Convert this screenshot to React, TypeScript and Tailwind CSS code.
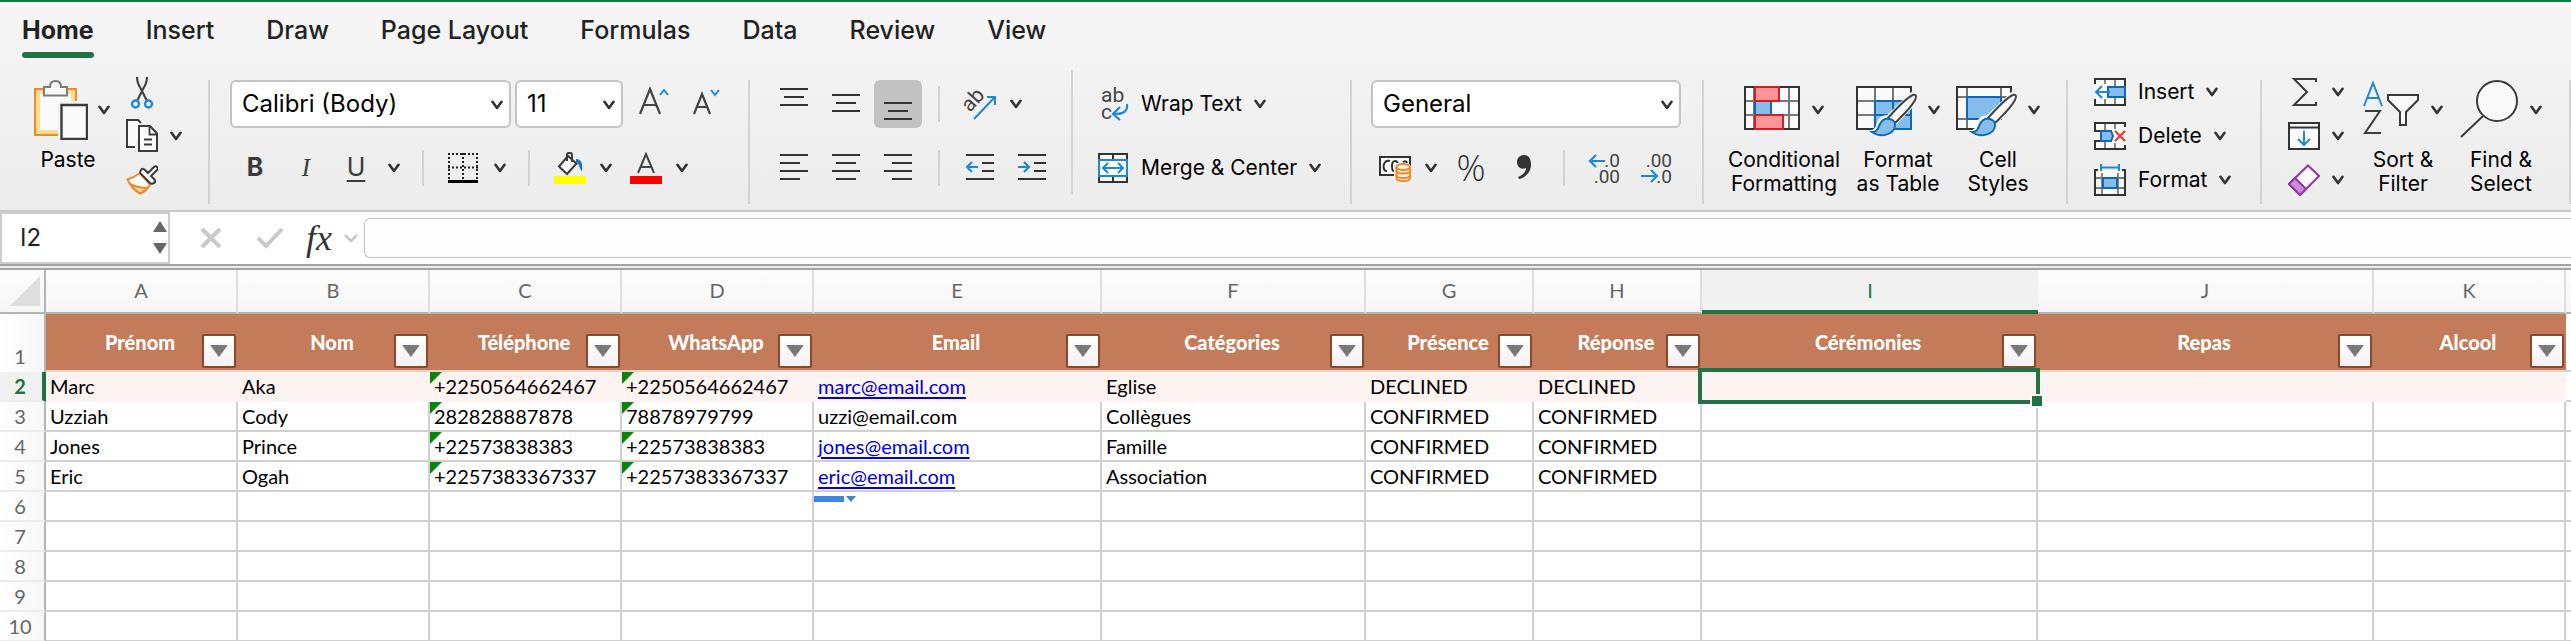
import { useState } from 'react';
import type { ReactNode } from 'react';

const tabs = ['Home', 'Insert', 'Draw', 'Page Layout', 'Formulas', 'Data', 'Review', 'View'];

const columns = [
  { id: 'A', name: 'Prénom', width: 192 },
  { id: 'B', name: 'Nom', width: 192 },
  { id: 'C', name: 'Téléphone', width: 192 },
  { id: 'D', name: 'WhatsApp', width: 192 },
  { id: 'E', name: 'Email', width: 288 },
  { id: 'F', name: 'Catégories', width: 264 },
  { id: 'G', name: 'Présence', width: 168 },
  { id: 'H', name: 'Réponse', width: 168 },
  { id: 'I', name: 'Cérémonies', width: 336 },
  { id: 'J', name: 'Repas', width: 336 },
  { id: 'K', name: 'Alcool', width: 192 }
];

const guests = [
  ['Marc', 'Aka', '+2250564662467', '+2250564662467', 'marc@email.com', 'Eglise', 'DECLINED', 'DECLINED'],
  ['Uzziah', 'Cody', '282828887878', '78878979799', 'uzzi@email.com', 'Collègues', 'CONFIRMED', 'CONFIRMED'],
  ['Jones', 'Prince', '+22573838383', '+22573838383', 'jones@email.com', 'Famille', 'CONFIRMED', 'CONFIRMED'],
  ['Eric', 'Ogah', '+2257383367337', '+2257383367337', 'eric@email.com', 'Association', 'CONFIRMED', 'CONFIRMED']
];

const rowNumbers = [2, 3, 4, 5, 6, 7, 8, 9, 10];

function Chevron() {
  return (
    <svg width="12" height="10" viewBox="0 0 12 10" fill="none" stroke="#333" strokeWidth="2.6" strokeLinecap="round" strokeLinejoin="round" className="shrink-0">
      <path d="M1.500 1.800 6 8l4.500-6.200" />
    </svg>
  );
}

function Divider({ className = 'h-[124px] mt-[10px]' }: { className?: string }) {
  return <div className={`w-0.5 shrink-0 bg-[#d3d3d3] ${className}`} />;
}

function IconButton({ label, className = '', children }: { label: string; className?: string; children: ReactNode }) {
  return (
    <button type="button" aria-label={label} className={`flex shrink-0 items-center justify-center ${className}`}>
      {children}
    </button>
  );
}

function PasteIcon() {
  return (
    <svg width="54" height="60" viewBox="0 0 54 60" fill="none" strokeWidth="2">
      <path d="M1 9h41v46H1z" fill="#fcdb93" stroke="#ec8a2d" />
      <path d="M6 14h31v36H6z" fill="#fafafa" />
      <path d="M10 7h6c0-4 2-6 5.500-6S27 3 27 7h6v8.500H10z" fill="#fafafa" stroke="#7b7b7b" />
      <path d="M24 21h30v39H24z" fill="#f3f3f3" />
      <path d="M27.500 25h25.500v34H27.500z" fill="#fafafa" stroke="#3b3b3b" strokeWidth="2.400" />
    </svg>
  );
}

function CutIcon() {
  return (
    <svg width="32" height="33" viewBox="0 0 32 33" fill="none" strokeWidth="2.200">
      <path d="M11 1c0 5 2 9 4 12l6 12M21 1c0 5-2 9-4 12l-6 12" stroke="#444" />
      <circle cx="9.500" cy="28" r="3.500" stroke="#1e88d2" strokeWidth="2.400" />
      <circle cx="22.500" cy="28" r="3.500" stroke="#1e88d2" strokeWidth="2.400" />
    </svg>
  );
}

function CopyIcon() {
  return (
    <svg width="32" height="34" viewBox="0 0 32 34" fill="none" stroke="#3b3b3b" strokeWidth="2">
      <path d="M9 28H1V1h11l3 3" fill="#fafafa" />
      <path d="M13 7h11l7 7.500V32H13z" fill="#fafafa" />
      <path d="M23.500 7v8.500H31M18 20.500h8M18 25.500h8" strokeWidth="1.800" />
    </svg>
  );
}

function PainterIcon() {
  return (
    <svg width="32" height="30" viewBox="0 0 32 30" fill="none" strokeWidth="2">
      <path d="M14 8C10 11 6 13 1.500 14.500 4 20 8 25 14 28.500c5-2 8-5 10-9z" fill="#fafafa" stroke="#ec8a2d" />
      <path d="M4 19c6 3 11 4 17 4-2 3-4 4-7 5.500C10 26 7 23 4 19z" fill="#fcdb93" stroke="#ec8a2d" />
      <path d="M15 5c1-2 3-1 4 0l3 3 6-6c2-2 5 1 3 3l-6 6 3 3c1 1 2 3 0 4s-3 1-4 0L15 9c-1-1-1-3 0-4z" fill="#fafafa" stroke="#3b3b3b" />
    </svg>
  );
}

function BordersIcon() {
  return (
    <svg width="30" height="30" viewBox="0 0 30 30" fill="none" stroke="#222" strokeWidth="2">
      <path d="M0 1h30M0 14.500h30M1 0v26M15 0v26M29 0v26" strokeDasharray="2 2" />
      <path d="M0 28.500h30" stroke="#000" strokeWidth="3" />
    </svg>
  );
}

function FillColorIcon() {
  return (
    <svg width="32" height="32" viewBox="0 0 32 32" fill="none">
      <path d="M14 4 5 14.500l8 7.500 9.500-10.500z" fill="#fafafa" stroke="#3b3b3b" strokeWidth="2" />
      <path d="M13 9V3c0-3 5-3 5 0v7" stroke="#3b3b3b" strokeWidth="2" />
      <path d="M22 7c5 0 7 4 6 12-3-2-2-7-6-9z" fill="#1e72bd" />
      <path d="M0 24h32v8H0z" fill="#ff0" />
    </svg>
  );
}

// Each line is [start x, end x, y]
function LinesIcon({ lines }: { lines: [number, number, number][] }) {
  return (
    <svg width="28" height="48" viewBox="0 0 28 48" stroke="#333" strokeWidth="2">
      {lines.map(([x1, x2, y]) => (
        <path key={y} d={`M${x1} ${y}H${x2}`} />
      ))}
    </svg>
  );
}

function IndentIcon({ out = false }: { out?: boolean }) {
  return (
    <svg width="28" height="48" viewBox="0 0 28 48" fill="none" stroke="#333" strokeWidth="2">
      <path d="M0 11h28M16 19h12M16 27h12M0 35h28" />
      <path d={out ? 'M12 23H1m5-5-5 5 5 5' : 'M0 23h11m-5-5 5 5-5 5'} stroke="#1e88d2" strokeWidth="2.200" />
    </svg>
  );
}

function OrientationIcon() {
  return (
    <svg width="32" height="32" viewBox="0 0 32 32" fill="none" className="overflow-visible">
      <text x="6" y="25" transform="rotate(-48 6 25)" fontFamily="Roboto, sans-serif" fontSize="21" fill="#444">ab</text>
      <path d="M10 31 31 9M23 9h8v8" stroke="#1e88d2" strokeWidth="2" />
    </svg>
  );
}

function WrapIcon() {
  return (
    <svg width="32" height="34" viewBox="0 0 32 34" fill="none" className="overflow-visible">
      <text x="4" y="15" fontFamily="Roboto, sans-serif" fontSize="21" fill="#444">ab</text>
      <text x="4" y="32" fontFamily="Roboto, sans-serif" fontSize="21" fill="#444">c</text>
      <path d="M30 17c1 8-4 10-13 10m6-7-7 7 7 6" stroke="#1e88d2" strokeWidth="2.200" />
    </svg>
  );
}

function MergeIcon() {
  return (
    <svg width="30" height="30" viewBox="0 0 30 30" fill="none" strokeWidth="2">
      <path d="M1 1h28v28H1zM15 1v28" fill="#fafafa" stroke="#333" />
      <path d="M1 7h28v16H1z" fill="#fafafa" stroke="#1e88d2" />
      <path d="M5 15h20M10 10l-5 5 5 5M20 10l5 5-5 5" stroke="#1e88d2" />
    </svg>
  );
}

function CurrencyIcon() {
  return (
    <svg width="32" height="28" viewBox="0 0 32 28" fill="none" strokeWidth="2">
      <path d="M1 3h30v18H1z" fill="#fafafa" stroke="#333" />
      <path d="M11 7C3 5 3 18 8 17M19 9c-2-3-6-3-6 3 0 4 1 5 2 5M24 8c3-2 4 0 4 2" stroke="#333" />
      <path d="M15 12l3-3h11l3 3v16H15z" fill="#f1f1f1" />
      <path d="M17.500 13v11c0 4 13.500 4 13.500 0V13" fill="#fff3e0" stroke="#ec8a2d" />
      <path d="M17.500 16.500c0 4 13.500 4 13.500 0M17.500 21c0 4 13.500 4 13.500 0" stroke="#ec8a2d" />
      <ellipse cx="24.200" cy="13" rx="6.800" ry="3" fill="#fff3e0" stroke="#ec8a2d" />
    </svg>
  );
}

function CommaIcon() {
  return (
    <svg width="14" height="26" viewBox="0 0 14 26">
      <path d="M7 0c4 0 7 3 7 9 0 8-5 13-12 15l-1-2c5-2 8-5 8-9-5 2-9-1-9-6 0-4 3-7 7-7z" fill="#333" />
    </svg>
  );
}

function DecimalIcon({ more = false }: { more?: boolean }) {
  return (
    <svg width="32" height="32" viewBox="0 0 32 32" fill="none" className="overflow-visible">
      <g fontFamily="Roboto, sans-serif" fontSize="19" fill="#444" textAnchor="end">
        <text x="31" y="15">{more ? '.0' : '.00'}</text>
        <text x="31" y="31">{more ? '.00' : '.0'}</text>
      </g>
      <path d={more ? 'M16 9H1m6-6-6 6 6 6' : 'M0 24h16m-6-6 6 6-6 6'} stroke="#1e88d2" strokeWidth="2.200" />
    </svg>
  );
}

function Brush() {
  return (
    <>
      <path d="M14 53c8 5 23 1 25-10L61 20c3-5 0-9-5-6L32 37c-8 0-9 5-10 9-1 4-5 6-8 7z" fill="#f3f3f3" stroke="#f3f3f3" strokeWidth="4" />
      <path d="M32 38C40 29 50 18 57 15c3-1 4 1 2 5-4 8-13 16-20 23z" fill="#fafafa" stroke="#444" strokeWidth="2" />
      <path d="M16 52c6 0 6-4 8-8 4-8 16-6 15 2-1 9-15 12-23 6z" fill="#84bdea" stroke="#1267b4" strokeWidth="2" />
    </>
  );
}

function ConditionalIcon() {
  return (
    <svg width="56" height="60" viewBox="0 0 56 60" fill="none" strokeWidth="2">
      <path d="M1 7h54v42H1z" fill="#fafafa" />
      <path d="M1 21h54M1 35h54M10 7v42M45 7v42" stroke="#777" />
      <path d="M1 7h54v42H1z" stroke="#333" />
      <path d="M27 22h17v12H27z" fill="#fafafa" />
      <path d="M11 21h16v14H11z" fill="#84bdea" stroke="#1267b4" />
      <path d="M11 7h24v14H11zM11 35h28v14H11z" fill="#ff9499" stroke="#cf2027" />
    </svg>
  );
}

function FormatTableIcon() {
  return (
    <svg width="60" height="60" viewBox="0 0 60 60" fill="none" strokeWidth="2" className="overflow-visible">
      <path d="M1 7h54v42H1z" fill="#fafafa" />
      <path d="M1 21h54M1 35h54M19 7v42M37 7v42" stroke="#777" />
      <path d="M1 7h54v42H1z" stroke="#333" />
      <path d="M19 21h36v28H19zM37 21v28M19 35h36" fill="#84bdea" stroke="#1267b4" />
      <Brush />
    </svg>
  );
}

function CellStylesIcon() {
  return (
    <svg width="60" height="60" viewBox="0 0 60 60" fill="none" strokeWidth="2" className="overflow-visible">
      <path d="M1 7h54v10H45v22l-8 10H1z" fill="#fafafa" />
      <path d="M1 17h54M1 39h30M11 7v42M45 7v22" stroke="#777" />
      <path d="M55 18V7H1v42h22" stroke="#333" />
      <path d="M11 17h34v22H11z" fill="#84bdea" stroke="#1267b4" />
      <Brush />
    </svg>
  );
}

function InsertCellsIcon() {
  return (
    <svg width="32" height="28" viewBox="0 0 32 28" fill="none" strokeWidth="2">
      <path d="M1 1h30v26H1z" fill="#fafafa" />
      <path d="M11 1v26M21 1v26M1 9h30M1 19h30" stroke="#777" strokeWidth="1.800" />
      <path d="M1 1h30v26H1z" stroke="#333" />
      <path d="M0 6h16v15H0z" fill="#fafafa" />
      <path d="M14 9h17v10H14z" fill="#84bdea" stroke="#1267b4" />
      <path d="M16 14H2m6-6-6 6 6 6" stroke="#1e88d2" />
    </svg>
  );
}

function DeleteCellsIcon() {
  return (
    <svg width="32" height="28" viewBox="0 0 32 28" fill="none" strokeWidth="2">
      <path d="M1 1h30v26H1z" fill="#fafafa" />
      <path d="M11 1v26M21 1v26" stroke="#777" strokeWidth="1.800" />
      <path d="M31 5V1H1v8h30M31 23v4H1v-8h30" stroke="#333" />
      <path d="M18 7h14v14H18z" fill="#fafafa" />
      <path d="M7 9h10l2 5-2 5H7z" fill="#84bdea" stroke="#1267b4" />
      <path d="m21 9 10 10M31 9 21 19" stroke="#e8403a" strokeWidth="2.400" />
    </svg>
  );
}

function FormatCellsIcon() {
  return (
    <svg width="32" height="32" viewBox="0 0 32 32" fill="none" strokeWidth="2">
      <path d="M1 6h30v25H1z" fill="#fafafa" />
      <path d="M8 9v22M24 9v22M1 14h30M1 24h30" stroke="#777" strokeWidth="1.800" />
      <path d="M4 6H1v25h30V6h-3" stroke="#333" />
      <path d="M9 14h14v10H9z" fill="#84bdea" stroke="#1267b4" />
      <path d="M7 0v7M25 0v7M7 3.500h18" stroke="#1e88d2" />
    </svg>
  );
}

function SumIcon() {
  return (
    <svg width="32" height="28" viewBox="0 0 32 28" fill="none" stroke="#3b3b3b" strokeWidth="2">
      <path d="M28 4V1H6l13 13L6 27h22v-3" />
    </svg>
  );
}

function FillDownIcon() {
  return (
    <svg width="32" height="28" viewBox="0 0 32 28" fill="none" strokeWidth="2">
      <path d="M1 1h30v26H1zM1 5.500h30" fill="#fafafa" stroke="#333" />
      <path d="M16 9v14m-6-6 6 6 6-6" stroke="#1e88d2" />
    </svg>
  );
}

function EraserIcon() {
  return (
    <svg width="32" height="32" viewBox="0 0 32 32" fill="none" stroke="#92359e" strokeWidth="2">
      <path d="M20 1.500 31 12 12 31 1 20z" fill="#fafafa" />
      <path d="m7 14 11 11-6 6L1 20z" fill="#cf8ddb" />
    </svg>
  );
}

function SortFilterIcon() {
  return (
    <svg width="56" height="60" viewBox="0 0 56 60" fill="none" strokeWidth="2">
      <path d="M1 26 10 3l9 23M4 18h12" stroke="#1e88d2" />
      <path d="M2 31h15L2 53h16" stroke="#3b3b3b" />
      <path d="M25 15h30v5L43 32v13h-6V32L25 20z" fill="#fafafa" stroke="#3b3b3b" />
    </svg>
  );
}

function FindIcon() {
  return (
    <svg width="58" height="60" viewBox="0 0 58 60" fill="none" stroke="#3b3b3b" strokeWidth="2">
      <circle cx="37" cy="21" r="20" fill="#fafafa" />
      <path d="M23 36 1 57" />
    </svg>
  );
}

function BigButton({ icon, lines, className }: { icon: ReactNode; lines: string[]; className: string }) {
  return (
    <button type="button" className={`mt-[10px] flex shrink-0 flex-col items-center self-start ${className}`}>
      <span className="flex h-[60px] items-center gap-3">
        {icon}
        <Chevron />
      </span>
      <span className="mt-2 text-[21px] leading-6 whitespace-nowrap">
        {lines.map(line => (
          <span key={line} className="block">{line}</span>
        ))}
      </span>
    </button>
  );
}

function MenuButton({ icon, label, className = 'h-11' }: { icon: ReactNode; label: string; className?: string }) {
  return (
    <button type="button" className={`flex items-center gap-3 text-[21px] whitespace-nowrap ${className}`}>
      <span className="flex w-8 justify-center">{icon}</span>
      {label}
      <Chevron />
    </button>
  );
}

function Dropdown({ label, value, className }: { label: string; value: string; className: string }) {
  return (
    <div className={`relative h-12 shrink-0 ${className}`}>
      <select
        aria-label={label}
        defaultValue={value}
        className="h-full w-full appearance-none rounded-md border-2 border-[#c4c4c4] bg-white px-2.5 text-[24px] text-black"
      >
        <option>{value}</option>
      </select>
      <span className="pointer-events-none absolute top-5 right-2">
        <Chevron />
      </span>
    </div>
  );
}

function Ribbon() {
  return (
    <div className="flex h-[140px] overflow-hidden pl-[34px]">
      {/* Clipboard */}
      <button type="button" className="mt-[10px] flex w-[76px] shrink-0 flex-col self-start">
        <span className="flex h-[60px] items-center gap-2.5">
          <PasteIcon />
          <Chevron />
        </span>
        <span className="mt-2 w-full pr-2 text-center text-[21px] leading-6">Paste</span>
      </button>
      <div className="ml-4 w-[82px] shrink-0">
        <IconButton label="Cut" className="h-11"><CutIcon /></IconButton>
        <IconButton label="Copy" className="h-11 gap-3"><CopyIcon /><Chevron /></IconButton>
        <IconButton label="Format Painter" className="h-11"><PainterIcon /></IconButton>
      </div>
      <Divider />

      {/* Font */}
      <div className="mt-[10px] ml-5 w-[518px] shrink-0">
        <div className="flex">
          <Dropdown label="Font" value="Calibri (Body)" className="w-[281px]" />
          <Dropdown label="Font Size" value="11" className="ml-1 w-[108px]" />
          <IconButton label="Increase Font Size" className="ml-4">
            <svg width="30" height="36" viewBox="0 0 30 36" fill="none" strokeWidth="2">
              <path d="M1 28 11 3l10 25M5 19h12" stroke="#444" strokeWidth="2.200" />
              <path d="m21 9 4-5 4 5" stroke="#1e88d2" />
            </svg>
          </IconButton>
          <IconButton label="Decrease Font Size" className="ml-6">
            <svg width="30" height="36" viewBox="0 0 30 36" fill="none" strokeWidth="2">
              <path d="M1 28 9 8l8 20M4 21h10" stroke="#444" strokeWidth="2.200" />
              <path d="m18 4 4 5 4-5" stroke="#1e88d2" />
            </svg>
          </IconButton>
        </div>
        <div className="mt-4 flex h-12 items-center text-[25px] text-[#3b3b3b]">
          <IconButton label="Bold" className="w-[50px] font-bold">B</IconButton>
          <IconButton label="Italic" className="w-[52px] font-['Liberation_Serif',serif] italic">I</IconButton>
          <IconButton label="Underline" className="w-12 underline underline-offset-4">U</IconButton>
          <IconButton label="Underline options" className="ml-2"><Chevron /></IconButton>
          <Divider className="ml-[22px] h-9" />
          <IconButton label="Borders" className="ml-6 gap-4"><BordersIcon /><Chevron /></IconButton>
          <Divider className="ml-[22px] h-9" />
          <IconButton label="Fill Color" className="ml-6 gap-[14px]"><FillColorIcon /><Chevron /></IconButton>
          <IconButton label="Font Color" className="ml-[18px] gap-[14px]">
            <svg width="32" height="32" viewBox="0 0 32 32" fill="none">
              <path d="m8 21 8-19 8 19M11 15h10" stroke="#444" strokeWidth="2" />
              <path d="M0 24h32v8H0z" fill="red" />
            </svg>
            <Chevron />
          </IconButton>
        </div>
      </div>
      <Divider />

      {/* Alignment */}
      <div className="mt-[10px] ml-5 w-[301px] shrink-0">
        <div className="flex items-center gap-1">
          <IconButton label="Top Align" className="w-12"><LinesIcon lines={[[0, 28, 9], [4, 24, 17], [0, 28, 25]]} /></IconButton>
          <IconButton label="Middle Align" className="w-12"><LinesIcon lines={[[0, 28, 15], [4, 24, 23], [0, 28, 31]]} /></IconButton>
          <IconButton label="Bottom Align" className="w-12 rounded-md bg-[#c2c2c2]"><LinesIcon lines={[[0, 28, 23], [4, 24, 31], [0, 28, 39]]} /></IconButton>
          <Divider className="ml-3 h-9" />
          <IconButton label="Orientation" className="ml-5 gap-[14px]"><OrientationIcon /><Chevron /></IconButton>
        </div>
        <div className="mt-4 flex items-center gap-1">
          <IconButton label="Align Left" className="w-12"><LinesIcon lines={[[0, 28, 11], [0, 20, 19], [0, 28, 27], [0, 20, 35]]} /></IconButton>
          <IconButton label="Center" className="w-12"><LinesIcon lines={[[0, 28, 11], [4, 24, 19], [0, 28, 27], [4, 24, 35]]} /></IconButton>
          <IconButton label="Align Right" className="w-12"><LinesIcon lines={[[0, 28, 11], [8, 28, 19], [0, 28, 27], [8, 28, 35]]} /></IconButton>
          <Divider className="ml-3 h-9" />
          <IconButton label="Decrease Indent" className="ml-3 w-12"><IndentIcon out /></IconButton>
          <IconButton label="Increase Indent" className="w-12"><IndentIcon /></IconButton>
        </div>
      </div>
      <Divider className="h-[124px]" />
      <div className="mt-[10px] w-[277px] shrink-0 pl-6">
        <MenuButton icon={<WrapIcon />} label="Wrap Text" className="h-12" />
        <MenuButton icon={<MergeIcon />} label="Merge & Center" className="mt-4 h-12" />
      </div>
      <Divider />

      {/* Number */}
      <div className="mt-[10px] w-[350px] shrink-0 pl-[19px]">
        <Dropdown label="Number Format" value="General" className="w-[310px]" />
        <div className="mt-4 flex h-12 items-center pl-2">
          <IconButton label="Currency" className="gap-[14px]"><CurrencyIcon /><Chevron /></IconButton>
          <IconButton label="Percent Style" className="ml-4 w-9 font-['Open_Sans',sans-serif] text-[36px] font-light text-[#333]">%</IconButton>
          <IconButton label="Comma Style" className="ml-7"><CommaIcon /></IconButton>
          <Divider className="ml-8 h-9" />
          <IconButton label="Increase Decimal" className="ml-6"><DecimalIcon more /></IconButton>
          <IconButton label="Decrease Decimal" className="ml-5"><DecimalIcon /></IconButton>
        </div>
      </div>
      <Divider />

      {/* Styles */}
      <div className="flex w-[362px] shrink-0 pl-5">
        <BigButton icon={<ConditionalIcon />} lines={['Conditional', 'Formatting']} className="w-[120px]" />
        <BigButton icon={<FormatTableIcon />} lines={['Format', 'as Table']} className="ml-1.5 w-24" />
        <BigButton icon={<CellStylesIcon />} lines={['Cell', 'Styles']} className="ml-1 w-24" />
      </div>
      <Divider />

      {/* Cells */}
      <div className="w-[192px] shrink-0 pl-[26px]">
        <MenuButton icon={<InsertCellsIcon />} label="Insert" />
        <MenuButton icon={<DeleteCellsIcon />} label="Delete" />
        <MenuButton icon={<FormatCellsIcon />} label="Format" />
      </div>
      <Divider />

      {/* Editing */}
      <div className="flex w-[307px] shrink-0 pl-[26px]">
        <div className="w-[70px]">
          <IconButton label="AutoSum" className="h-11 gap-3"><SumIcon /><Chevron /></IconButton>
          <IconButton label="Fill" className="h-11 gap-3"><FillDownIcon /><Chevron /></IconButton>
          <IconButton label="Clear" className="h-11 gap-3"><EraserIcon /><Chevron /></IconButton>
        </div>
        <BigButton icon={<SortFilterIcon />} lines={['Sort &', 'Filter']} className="w-[90px]" />
        <BigButton icon={<FindIcon />} lines={['Find &', 'Select']} className="ml-2 w-[90px]" />
      </div>
      <Divider />
    </div>
  );
}

function FormulaBar({ cell }: { cell: string }) {
  const [formula, setFormula] = useState('');

  return (
    <div className="flex h-[52px] items-center bg-white">
      <div className="flex h-full w-[170px] shrink-0 items-center border-2 border-[#cdcdcd] bg-white">
        <input aria-label="Name Box" defaultValue={cell} className="w-[151px] pl-[18px] text-[24px] text-[#222] outline-none" />
        <svg width="14" height="34" viewBox="0 0 14 34" fill="#666">
          <path d="M7 0l7 11H0zM0 22h14L7 33z" />
        </svg>
      </div>
      <IconButton label="Cancel" className="ml-[30px]">
        <svg width="22" height="22" viewBox="0 0 22 22" stroke="#c9c9c9" strokeWidth="4">
          <path d="m2 2 18 18M20 2 2 20" />
        </svg>
      </IconButton>
      <IconButton label="Enter" className="ml-[34px]">
        <svg width="28" height="22" viewBox="0 0 28 22" fill="none" stroke="#c9c9c9" strokeWidth="4">
          <path d="m2 11 8 8L26 2" />
        </svg>
      </IconButton>
      <IconButton label="Insert Function" className="ml-[22px] gap-3 font-['Liberation_Serif',serif] text-[36px] leading-none text-[#333] italic">
        fx
        <svg width="14" height="9" viewBox="0 0 14 9" fill="none" stroke="#c4c4c4" strokeWidth="2.400">
          <path d="m1 1 6 6 6-6" />
        </svg>
      </IconButton>
      <input
        aria-label="Formula"
        value={formula}
        onChange={e => setFormula(e.target.value)}
        className="ml-1.5 h-10 min-w-0 flex-1 rounded-l-md border border-r-0 border-[#c4c4c4] bg-[#fdfdfd] px-3 text-[24px] outline-none"
      />
    </div>
  );
}

function FilterButton({ name }: { name: string }) {
  return (
    <button
      type="button"
      aria-label={`Filter ${name}`}
      className="absolute right-0.5 bottom-0.5 flex h-[34px] w-[34px] items-center justify-center rounded-xs border-2 border-[#85492f] bg-linear-to-b from-white to-[#f2f2f2]"
    >
      <svg width="18" height="12" viewBox="0 0 18 12" fill="#7a7a7a">
        <path d="M0 0h18L9 12z" />
      </svg>
    </button>
  );
}

function CellText({ col, text }: { col: number; text: string }) {
  const isNumber = col === 2 || col === 3;

  if (col === 4 && text !== 'uzzi@email.com') {
    return <a href={`mailto:${text}`} className="text-[#0000e0] underline decoration-2 underline-offset-3">{text}</a>;
  }
  return (
    <>
      {isNumber && (
        <svg width="12" height="12" viewBox="0 0 12 12" className="absolute top-0 left-0">
          <path d="M0 0h12L0 12z" fill="#0a840a" />
        </svg>
      )}
      <span className="relative">{text}</span>
    </>
  );
}

function Sheet() {
  return (
    <table className="w-full table-fixed border-separate border-spacing-0 font-['Lato',sans-serif] text-[20px] leading-7 text-black">
      <colgroup>
        <col className="w-[46px]" />
        {columns.map(c => (
          <col key={c.id} style={{ width: c.width }} />
        ))}
        <col />
      </colgroup>
      <thead>
        <tr className="h-11 bg-linear-to-b from-[#fcfcfc] to-[#f6f6f6] text-[#666]">
          <th className="border-r-2 border-b-2 border-[#b4b4b4] p-0">
            <svg width="30" height="30" viewBox="0 0 30 30" className="mr-1 ml-auto">
              <path d="M30 0v30H0z" fill="#dedede" />
            </svg>
          </th>
          {columns.map(c => (
            <th
              key={c.id}
              scope="col"
              className={
                c.id === 'I'
                  ? 'border-b-4 border-[#217346] bg-[#f1f1f1] p-0 font-normal text-[#217346]'
                  : 'border-r-2 border-b-2 border-r-[#dedede] border-b-[#b4b4b4] p-0 pb-0.5 font-normal'
              }
            >
              {c.id}
            </th>
          ))}
          <th className="border-b-2 border-[#b4b4b4] p-0" />
        </tr>
      </thead>
      <tbody>
        <tr className="h-[58px]">
          <th scope="row" className="border-r-2 border-[#b4b4b4] bg-linear-to-r from-white to-[#f7f7f7] p-0 pr-1 pb-0.5 align-bottom font-normal text-[#666]">1</th>
          {columns.map(c => (
            <th key={c.id} scope="col" className="relative border-b-2 border-[#e6d3c8] bg-[#c47b59] p-0 pr-1 font-black text-white">
              {c.name}
              <FilterButton name={c.name} />
            </th>
          ))}
          <td className="border-b-2 border-[#d0d0d0]" />
        </tr>
        {rowNumbers.map((n, row) => (
          <tr key={n} className="h-[30px]">
            <th
              scope="row"
              className={
                n === 2
                  ? 'border-r-4 border-b-2 border-r-[#217346] border-b-[#ececec] bg-[#f1f1f1] p-0 pr-0.5 font-bold text-[#217346]'
                  : 'border-r-2 border-b-2 border-r-[#b4b4b4] border-b-[#ececec] bg-linear-to-r from-white to-[#f7f7f7] p-0 pr-1 font-normal text-[#666]'
              }
            >
              {n}
            </th>
            {columns.map((c, col) => (
              <td
                key={c.id}
                className={
                  n === 2
                    ? 'relative border-b-2 border-[#fdf3f0] bg-[#fdf3f0] p-0 pl-1 whitespace-nowrap'
                    : 'relative border-r-2 border-b-2 border-[#d0d0d0] p-0 pl-1 whitespace-nowrap'
                }
              >
                {guests[row]?.[col] && <CellText col={col} text={guests[row][col]} />}
                {n === 6 && c.id === 'E' && (
                  <svg width="44" height="8" viewBox="0 0 44 8" fill="#3f87dc" className="absolute top-1 left-0">
                    <path d="M0 0h30v6H0zM32 0h10l-5 6z" />
                  </svg>
                )}
                {n === 2 && c.id === 'I' && (
                  <div className="absolute -top-1 -right-0.5 -bottom-1 -left-1 z-10 border-4 border-[#217346]">
                    <div className="absolute -right-2 -bottom-2 h-[14px] w-[14px] border-2 border-white bg-[#217346]" />
                  </div>
                )}
              </td>
            ))}
            <td className="border-b-2 border-[#d0d0d0]" />
          </tr>
        ))}
      </tbody>
    </table>
  );
}

export default function App() {
  const [activeTab, setActiveTab] = useState('Home');

  return (
    <div className="flex h-screen flex-col overflow-hidden bg-white font-['Inter',sans-serif] text-black">
      <header className="shrink-0 border-t-2 border-b-2 border-t-[#107c41] border-b-[#c9c9c9] bg-linear-to-b from-[#f6f6f6] to-[#ececec]">
        <nav className="flex h-[68px] gap-[52px] pl-[22px] text-[25px] text-[#222]">
          {tabs.map(tab => (
            <button key={tab} type="button" onClick={() => setActiveTab(tab)} className="flex flex-col pt-3 whitespace-nowrap">
              <span className={tab === activeTab ? 'leading-8 font-bold' : 'leading-8 font-medium'}>{tab}</span>
              {tab === activeTab && <span className="mt-1.5 h-1.5 w-full rounded-full bg-[#217346]" />}
            </button>
          ))}
        </nav>
        <Ribbon />
      </header>
      <FormulaBar cell="I2" />
      <div className="h-1.5 shrink-0 border-t-2 border-b-2 border-[#a3a3a3] bg-[#ededed]" />
      <main className="min-h-0 flex-1 overflow-hidden">
        <Sheet />
      </main>
    </div>
  );
}
